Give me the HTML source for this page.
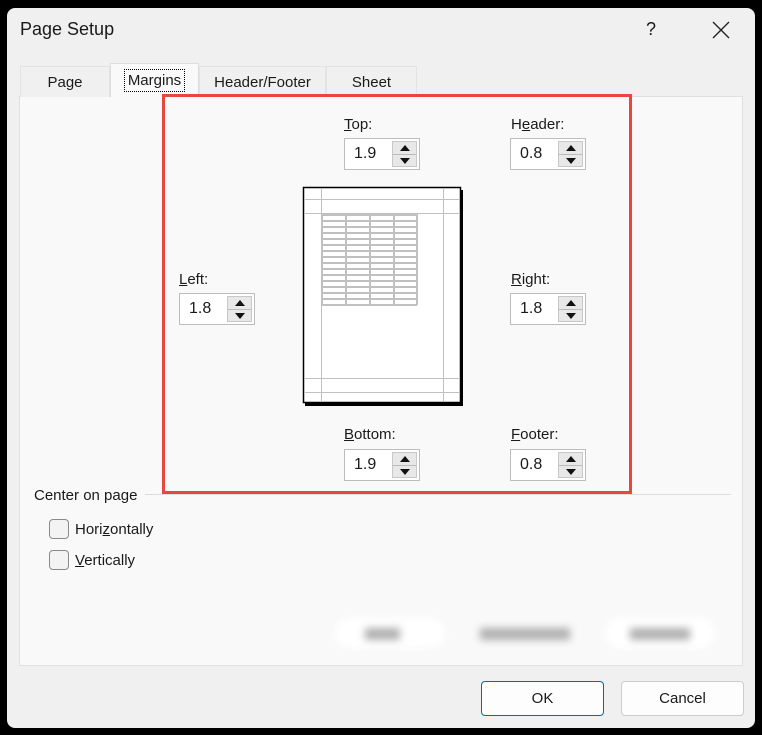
<!DOCTYPE html>
<html><head><style>
*{box-sizing:border-box;margin:0;padding:0}
body{width:762px;height:735px;background:#000;position:relative;overflow:hidden;font-family:"Liberation Sans",sans-serif;color:#1a1a1a;font-size:15px}
.a{position:absolute}
.dlg{left:7px;top:8px;width:748px;height:720px;background:#f0f0f0;border-radius:8px}
.panel{left:19px;top:96px;width:724px;height:570px;background:#f9f9f9;border:1px solid #e0e0e0}
.tab{top:66px;height:31px;text-align:center;line-height:31px;font-size:15px;border:1px solid #e3e3e3;border-bottom:none;background:#f0f0f0}
.spin{width:76px;height:32px;background:#fff;border:1px solid #bdbdbd}
.spin span{position:absolute;left:9px;top:6px;font-size:16px}
.sb{position:absolute;right:2px;top:2px;width:25px;height:26px;background:#e8e8e8;border:1px solid #c8c8c8}
.sb i{position:absolute;left:7px;width:0;height:0;border-left:5px solid transparent;border-right:5px solid transparent}
.sb hr{position:absolute;left:0;right:0;top:12px;border:none;border-top:1px solid #bbb}
.lbl{font-size:15px}
.cb{width:20px;height:20px;border:1px solid #8a8a8a;border-radius:4px;background:#f3f3f3}
.btn{top:681px;width:123px;height:35px;border:1px solid #ccc;border-radius:4px;background:#fdfdfd;text-align:center;line-height:33px;font-size:15px}
.g{background:#b0b0b0}
</style></head><body>
<div class="a dlg"></div>
<div class="a" style="left:20px;top:19px;font-size:18px">Page Setup</div>
<div class="a" style="left:646px;top:19px;font-size:18px;font-weight:300">?</div>
<svg class="a" style="left:711px;top:20px" width="20" height="20"><path d="M2 2L18 18M18 2L2 18" stroke="#222" stroke-width="1.4"/></svg>
<div class="a panel"></div>
<div class="a tab" style="left:20px;width:90px">Page</div>
<div class="a tab" style="left:110px;width:89px;top:63px;height:34px;background:#f9f9f9;border-color:#ddd;line-height:34px"><span style="border:1px dotted #000;padding:2px 3px">Margins</span></div>
<div class="a tab" style="left:199px;width:127px">Header/Footer</div>
<div class="a tab" style="left:326px;width:91px">Sheet</div>

<div class="a" style="left:162px;top:94px;width:470px;height:400px;border:3px solid #e8473f"></div>

<div class="a lbl" style="left:344px;top:116px"><u>T</u>op:</div>
<div class="a lbl" style="left:511px;top:116px">H<u>e</u>ader:</div>
<div class="a lbl" style="left:179px;top:271px"><u>L</u>eft:</div>
<div class="a lbl" style="left:511px;top:271px"><u>R</u>ight:</div>
<div class="a lbl" style="left:344px;top:426px"><u>B</u>ottom:</div>
<div class="a lbl" style="left:511px;top:426px"><u>F</u>ooter:</div>

<div class="a spin" style="left:344px;top:138px"><span>1.9</span><div class="sb"><i style="top:3px;border-bottom:6px solid #111"></i><hr><i style="top:16px;border-top:6px solid #111"></i></div></div>
<div class="a spin" style="left:510px;top:138px"><span>0.8</span><div class="sb"><i style="top:3px;border-bottom:6px solid #111"></i><hr><i style="top:16px;border-top:6px solid #111"></i></div></div>
<div class="a spin" style="left:179px;top:293px"><span>1.8</span><div class="sb"><i style="top:3px;border-bottom:6px solid #111"></i><hr><i style="top:16px;border-top:6px solid #111"></i></div></div>
<div class="a spin" style="left:510px;top:293px"><span>1.8</span><div class="sb"><i style="top:3px;border-bottom:6px solid #111"></i><hr><i style="top:16px;border-top:6px solid #111"></i></div></div>
<div class="a spin" style="left:344px;top:449px"><span>1.9</span><div class="sb"><i style="top:3px;border-bottom:6px solid #111"></i><hr><i style="top:16px;border-top:6px solid #111"></i></div></div>
<div class="a spin" style="left:510px;top:449px"><span>0.8</span><div class="sb"><i style="top:3px;border-bottom:6px solid #111"></i><hr><i style="top:16px;border-top:6px solid #111"></i></div></div>

<svg class="a" style="left:300px;top:185px" width="166" height="222">
<rect x="5" y="5" width="158" height="216" fill="#000"/>
<rect x="3.5" y="2.5" width="157" height="215" fill="#fff" stroke="#000" stroke-width="1.5"/>
<g stroke="#c0c0c0" stroke-width="1">
<line x1="21.5" y1="3" x2="21.5" y2="217"/><line x1="143.5" y1="3" x2="143.5" y2="217"/>
<line x1="4" y1="14.5" x2="160" y2="14.5"/><line x1="4" y1="28.5" x2="160" y2="28.5"/>
<line x1="4" y1="193.5" x2="160" y2="193.5"/><line x1="4" y1="207.5" x2="160" y2="207.5"/>
</g>
<g stroke="#c0c0c0" stroke-width="2">
<line x1="22" y1="29" x2="22" y2="120"/><line x1="46" y1="29" x2="46" y2="120"/><line x1="70" y1="29" x2="70" y2="120"/><line x1="94" y1="29" x2="94" y2="120"/><line x1="117" y1="29" x2="117" y2="120"/>
<line x1="22" y1="30" x2="117" y2="30"/><line x1="22" y1="36" x2="117" y2="36"/><line x1="22" y1="42" x2="117" y2="42"/><line x1="22" y1="48" x2="117" y2="48"/><line x1="22" y1="54" x2="117" y2="54"/><line x1="22" y1="60" x2="117" y2="60"/><line x1="22" y1="66" x2="117" y2="66"/><line x1="22" y1="72" x2="117" y2="72"/><line x1="22" y1="78" x2="117" y2="78"/><line x1="22" y1="84" x2="117" y2="84"/><line x1="22" y1="90" x2="117" y2="90"/><line x1="22" y1="96" x2="117" y2="96"/><line x1="22" y1="102" x2="117" y2="102"/><line x1="22" y1="108" x2="117" y2="108"/><line x1="22" y1="114" x2="117" y2="114"/><line x1="22" y1="120" x2="117" y2="120"/>
</g></svg>

<div class="a" style="left:34px;top:487px;font-size:15px">Center on page</div>
<div class="a" style="left:145px;top:494px;width:586px;height:1px;background:#ddd"></div>
<div class="a cb" style="left:49px;top:519px"></div>
<div class="a" style="left:75px;top:521px">Hori<u>z</u>ontally</div>
<div class="a cb" style="left:49px;top:550px"></div>
<div class="a" style="left:75px;top:552px"><u>V</u>ertically</div>

<div class="a" style="left:330px;top:612px;width:400px;height:44px;filter:blur(4px)">
<div class="a" style="left:5px;top:6px;width:110px;height:30px;background:#fff;border-radius:15px"></div>
<div class="a g" style="left:35px;top:16px;width:35px;height:12px"></div>
<div class="a g" style="left:150px;top:16px;width:90px;height:12px"></div>
<div class="a" style="left:275px;top:6px;width:110px;height:30px;background:#fff;border-radius:15px"></div>
<div class="a g" style="left:300px;top:16px;width:60px;height:12px"></div>
</div>

<div class="a btn" style="left:481px;border:1px solid #0067c0">OK</div>
<div class="a btn" style="left:621px">Cancel</div>
</body></html>
